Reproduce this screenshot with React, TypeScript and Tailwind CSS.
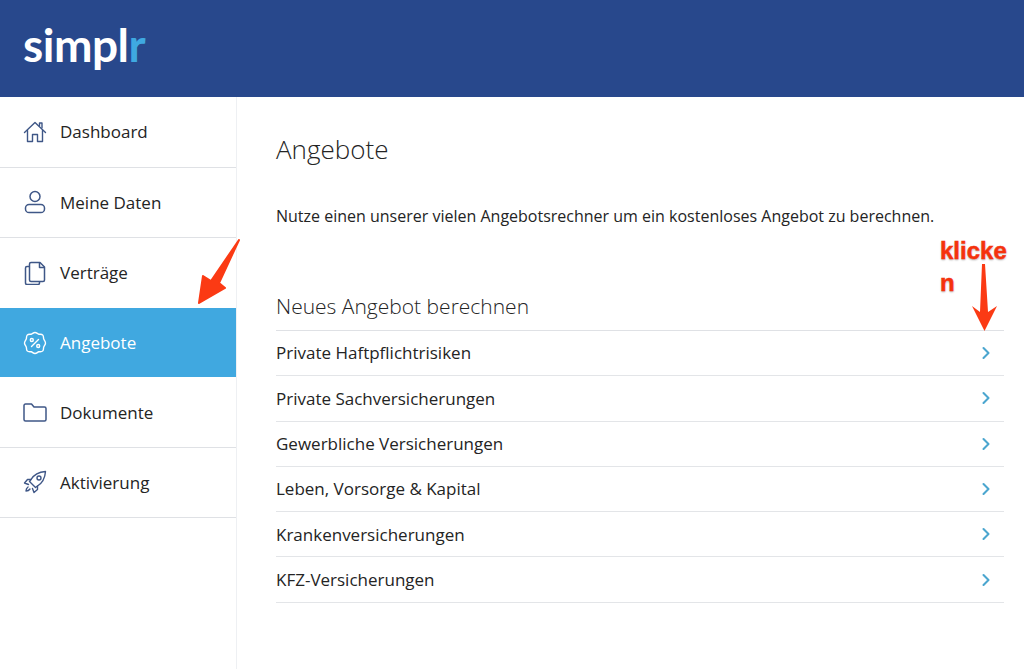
import React from "react";
import { ChevronRight } from "lucide-react";

const HomeIcon = () => (
  <svg width="24" height="24" viewBox="0 0 24 24" fill="none" stroke="currentColor" strokeWidth="1.4" strokeLinejoin="round" strokeLinecap="round">
    <path d="M1.5 12.5 12 2.5l10.5 10" />
    <path d="M4.5 10.5V21.5h5v-7h5v7h5V10.5" />
    <path d="M16.5 5.5V3h2.5v4.8" />
  </svg>
);

const UserIcon = () => (
  <svg width="24" height="24" viewBox="0 0 24 24" fill="none" stroke="currentColor" strokeWidth="1.5">
    <circle cx="12" cy="6.5" r="5" />
    <rect x="2.5" y="14.5" width="19" height="8" rx="3.6" />
  </svg>
);

const CopyIcon = () => (
  <svg width="24" height="24" viewBox="0 0 24 24" fill="none" stroke="currentColor" strokeWidth="1.5" strokeLinejoin="round">
    <path d="M8 1.5h9l4.5 4.5v13a1.5 1.5 0 0 1-1.5 1.5H8A1.5 1.5 0 0 1 6.5 19V3A1.5 1.5 0 0 1 8 1.5Z" />
    <path d="M16.5 1.5V6.5h5" />
    <path d="M6.5 5.5H4A1.5 1.5 0 0 0 2.5 7v15A1.5 1.5 0 0 0 4 23.5h11a1.5 1.5 0 0 0 1.5-1.5v-1.5" />
  </svg>
);

const BadgeIcon = () => (
  <svg width="24" height="24" viewBox="0 0 24 24" fill="none" stroke="currentColor" strokeWidth="1.4" strokeLinejoin="round" strokeLinecap="round">
    <path d="M12 1.5c1.700 0 2.500 1.400 3.800 1.700 1.400.3 2.900-.3 4 .9 1 1.100.5 2.500.9 3.800.4 1.300 1.800 2.300 1.800 4.100s-1.400 2.800-1.800 4.100c-.4 1.300.1 2.700-.9 3.800-1.100 1.200-2.600.6-4 .9-1.300.3-2.100 1.700-3.800 1.700s-2.500-1.400-3.800-1.700c-1.400-.3-2.900.3-4-.9-1-1.100-.5-2.500-.9-3.800C2.900 14.800 1.500 13.800 1.500 12s1.400-2.800 1.800-4.100c.4-1.300-.1-2.700.9-3.800 1.100-1.200 2.600-.6 4-.9C9.500 2.900 10.300 1.500 12 1.500Z" />
    <path d="m8.500 15.500 7-7" />
    <circle cx="8.800" cy="9" r="1.500" />
    <circle cx="15.200" cy="15" r="1.500" />
  </svg>
);

const FolderIcon = () => (
  <svg width="24" height="24" viewBox="0 0 24 24" fill="none" stroke="currentColor" strokeWidth="1.5" strokeLinejoin="round">
    <path d="M1 5.500A1.500 1.500 0 0 1 2.500 4h6l2.500 3h10.500A1.500 1.500 0 0 1 23 8.500v11a1.500 1.500 0 0 1-1.500 1.500h-19A1.500 1.500 0 0 1 1 19.500Z" />
  </svg>
);

const RocketIcon = () => (
  <svg width="24" height="24" viewBox="0 0 24 24" fill="none" stroke="currentColor" strokeWidth="1.4" strokeLinejoin="round" strokeLinecap="round">
    <path d="M8 9.500C11 4.500 16 2 22.500 1.500 22 8 19.500 13 14.500 16l-2 1.500-6-6Z" />
    <circle cx="16" cy="8" r="2" />
    <path d="M8 9.500H4.500L1.500 13l4 1.500" />
    <path d="M14.500 16v3.500L11 22.500 9.500 18.500" />
    <path d="M5 17c-1.500 1-2 2.500-2 4 1.500 0 3-.5 4-2" />
  </svg>
);

const navItems = [
  { label: "Dashboard", icon: <HomeIcon />, row: "h-[70.5px] border-b border-[#dfe1e5]" },
  { label: "Meine Daten", icon: <UserIcon />, row: "h-[70.5px] border-b border-[#dfe1e5]" },
  { label: "Verträge", icon: <CopyIcon />, row: "h-[70px]" },
  { label: "Angebote", icon: <BadgeIcon />, row: "h-[69px] bg-[#40a8e0] text-white" },
  { label: "Dokumente", icon: <FolderIcon />, row: "h-[70.5px] border-b border-[#dfe1e5] pt-px" },
  { label: "Aktivierung", icon: <RocketIcon />, row: "h-[70.5px] border-b border-[#dfe1e5]" },
];

const offers = [
  "Private Haftpflichtrisiken",
  "Private Sachversicherungen",
  "Gewerbliche Versicherungen",
  "Leben, Vorsorge & Kapital",
  "Krankenversicherungen",
  "KFZ-Versicherungen",
];

export default function App() {
  return (
    <div className="relative h-[669px] w-[1024px] overflow-hidden bg-white text-[#242424] [font-family:'Open_Sans',sans-serif]">
      {/* Header */}
      <header className="flex h-[97px] items-center bg-[#28488c] pb-[8px] pl-[23px]">
        <span className="text-[46px] font-bold leading-none tracking-[-0.5px] text-white [font-family:Lato,sans-serif]">
          simpl<span className="text-[#3fa9e1]">r</span>
        </span>
      </header>

      <div className="flex h-[572px]">
        {/* Sidebar */}
        <aside className="w-[237px] border-r border-[#eef0f3]">
          {navItems.map((item) => (
            <div key={item.label} className={`flex items-center gap-[13px] pl-[23px] text-[17px] ${item.row}`}>
              <span className={item.label === "Angebote" ? "text-white" : "text-[#3f5787]"}>{item.icon}</span>
              <span>{item.label}</span>
            </div>
          ))}
        </aside>

        {/* Main */}
        <main className="flex-1 pl-[39px] pr-5 pt-[34px]">
          <h1 className="text-[26px] font-light leading-[36px]">Angebote</h1>
          <p className="mt-[35px] text-[16px] leading-[28px]">
            Nutze einen unserer vielen Angebotsrechner um ein kostenloses Angebot zu berechnen.
          </p>
          <h2 className="mt-[60px] border-b border-[#dfe1e5] pb-[8px] text-[21px] font-light leading-[32px]">
            Neues Angebot berechnen
          </h2>
          {offers.map((offer) => (
            <div
              key={offer}
              className="flex h-[45.3px] items-center justify-between border-b border-[#e3e5e8] text-[17px]"
            >
              <span>{offer}</span>
              <ChevronRight className="mr-[8px] text-[#4ba6cf]" size={20} strokeWidth={2.5} />
            </div>
          ))}
        </main>
      </div>

      {/* Annotations */}
      <svg className="absolute left-[190px] top-[235px]" width="55" height="72" viewBox="0 0 55 72">
        <path d="M49 5 29 48l6 5L9 68l4-27 8 5Z" fill="#fb3a14" stroke="#fb3a14" strokeWidth="2" strokeLinejoin="round" />
      </svg>
      <div className="absolute left-[940px] top-[235px] w-[72px] break-all text-[24px] font-bold leading-[32px] text-[#f5320c] [font-family:'Liberation_Sans',sans-serif] [-webkit-text-stroke:0.5px_#f5320c] [text-shadow:0_0_2px_#fff,0_1px_2px_#9a9a9a]">
        klicken
      </div>
      <svg className="absolute left-[970px] top-[262px]" width="30" height="72" viewBox="0 0 30 72">
        <path d="M12 2h3l3 48 9-6-12.500 25L2 44l8 6Z" fill="#fb3a14" />
      </svg>
    </div>
  );
}
